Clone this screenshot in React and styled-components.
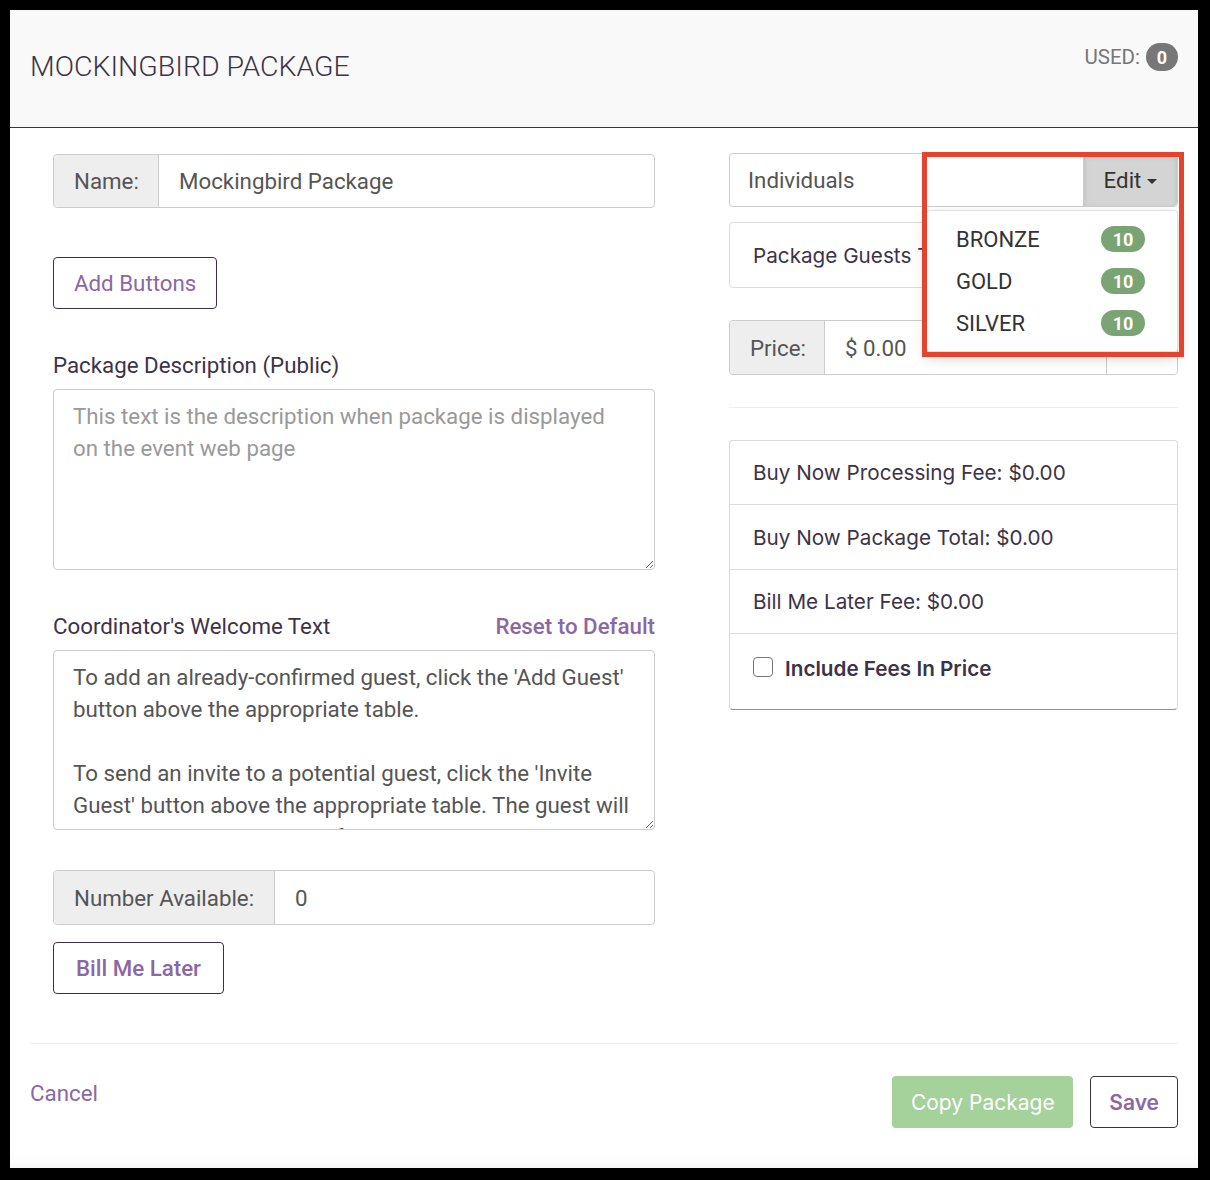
import React from "react";
import styled, { createGlobalStyle } from "styled-components";

const GlobalStyle = createGlobalStyle`
  html, body {
    margin: 0;
    padding: 0;
    background: #000;
  }
  body {
    padding: 10px 12px 12px 10px;
    font-family: Roboto, "Liberation Sans", sans-serif;
  }
  * { box-sizing: border-box; }
`

const PURPLE = "#8b67a3";
const DARK = "#3d3347";

const Modal = styled.div`
  width: 1188px;
  height: 1158px;
  background: #fff;
  display: flex;
  flex-direction: column;
  box-shadow: inset 0 -14px 14px -12px rgba(0, 0, 0, 0.06);
`

const Header = styled.div`
  height: 118px;
  background: #f9f9f9;
  border-bottom: 1px solid #3d2f48;
  display: flex;
  justify-content: space-between;
  align-items: center;
  padding: 0 20px;
`

const Title = styled.h1`
  margin: -4px 0 0;
  font-size: 28.5px;
  font-weight: 300;
  color: ${DARK};
`

const Used = styled.div`
  align-self: flex-start;
  margin-top: 33px;
  display: flex;
  align-items: center;
  gap: 6px;
  font-size: 20.5px;
  color: #777;
`

const CountBadge = styled.span`
  display: inline-flex;
  align-items: center;
  justify-content: center;
  min-width: 32px;
  height: 28px;
  border-radius: 14px;
  background: #777;
  color: #fff;
  font-weight: 700;
  font-size: 18px;
`

const Body = styled.div`
  display: grid;
  grid-template-columns: 602px 449px;
  column-gap: 74px;
  padding: 26px 20px 0 43px;
`

const Column = styled.div`
  display: flex;
  flex-direction: column;
  margin-top: ${(p) => p.mt || 0}px;
`

const InputGroup = styled.div`
  display: flex;
  height: ${(p) => p.h || 54}px;
  margin-top: ${(p) => p.mt || 0}px;
  border: 1px solid #ccc;
  border-radius: 4px;
  font-size: 22.3px;
  position: relative;
`

const Addon = styled.div`
  display: flex;
  align-items: center;
  width: ${(p) => p.w}px;
  padding-left: 20px;
  background: #eee;
  color: #555;
  border-right: 1px solid #ccc;
  border-radius: 4px 0 0 4px;
  flex-shrink: 0;
`

const Field = styled.div`
  flex: 1;
  display: flex;
  align-items: center;
  padding-left: ${(p) => p.pl || 20}px;
  color: #555;
`

const TailAddon = styled.div`
  width: ${(p) => p.w}px;
  display: flex;
  align-items: center;
  justify-content: center;
  gap: 6px;
  border-left: 1px solid #ccc;
  background: ${(p) => p.bg || "#fff"};
  color: #333;
  border-radius: 0 4px 4px 0;
  box-shadow: ${(p) => (p.active ? "inset 0 3px 5px rgba(0,0,0,0.125)" : "none")};
`

const Caret = styled.span`
  width: 0;
  height: 0;
  border-left: 5px solid transparent;
  border-right: 5px solid transparent;
  border-top: 5px solid #333;
  margin-top: 2px;
`

const OutlineButton = styled.button`
  align-self: flex-start;
  height: 52px;
  margin-top: ${(p) => p.mt || 0}px;
  padding: 0 ${(p) => p.px || 20}px;
  background: #fff;
  border: 1px solid #3d2f48;
  border-radius: 4px;
  color: ${PURPLE};
  font-family: ${(p) => (p.inter ? "Inter, sans-serif" : "Roboto, sans-serif")};
  font-size: ${(p) => (p.inter ? 21 : 22.3)}px;
  font-weight: ${(p) => (p.bold ? (p.inter ? 600 : 500) : 400)};
  cursor: pointer;
`

const LabelRow = styled.div`
  display: flex;
  justify-content: space-between;
  align-items: center;
  height: 28px;
  margin-top: ${(p) => p.mt}px;
  margin-bottom: 10px;
  font-size: 22.3px;
  color: ${DARK};
`

const LinkText = styled.span`
  color: ${PURPLE};
  font-weight: 500;
`

const TextArea = styled.textarea`
  display: block;
  width: 100%;
  height: ${(p) => p.h}px;
  padding: 10px 19px;
  border: 1px solid #ccc;
  border-radius: 4px;
  font-family: Roboto, sans-serif;
  font-size: 22.3px;
  line-height: 32px;
  color: #555;
  overflow: hidden;
  resize: vertical;
  outline: none;
  &::placeholder { color: #999; }
`

const Menu = styled.div`
  position: absolute;
  top: calc(100% + 4px);
  right: -1px;
  width: 252px;
  padding: 7px 0;
  background: #fff;
  border: 1px solid rgba(0, 0, 0, 0.12);
  border-radius: 4px;
  box-shadow: 0 6px 14px rgba(0, 0, 0, 0.18);
  z-index: 2;
`

const MenuItem = styled.div`
  height: 42px;
  display: flex;
  align-items: center;
  justify-content: space-between;
  padding: 0 32px 0 29px;
  font-size: 22px;
  color: #333;
`

const GreenBadge = styled.span`
  display: inline-flex;
  align-items: center;
  justify-content: center;
  width: 44px;
  height: 26px;
  border-radius: 13px;
  background: #7ba474;
  color: #fff;
  font-weight: 700;
  font-size: 18px;
`

const Highlight = styled.div`
  position: absolute;
  top: -2px;
  right: -7px;
  width: 262px;
  height: 205px;
  border: 5px solid #e5432b;
  z-index: 3;
  pointer-events: none;
`

const Panel = styled.div`
  margin-top: ${(p) => p.mt || 0}px;
  border: 1px solid #ddd;
  border-radius: 4px;
  font-family: Inter, "Noto Sans", sans-serif;
  font-size: 20.7px;
  color: ${DARK};
  ${(p) => p.accent && "border-bottom-color: #9a88a8;"}
`

const PanelRow = styled.div`
  height: ${(p) => p.h}px;
  display: flex;
  align-items: center;
  gap: 12px;
  padding: 0 23px ${(p) => (p.bold ? 6 : 0)}px;
  font-weight: ${(p) => (p.bold ? 600 : 400)};
  & + & { border-top: 1px solid #ddd; }
`

const CheckBox = styled.span`
  width: 20px;
  height: 20px;
  border: 1.5px solid #767676;
  border-radius: 4px;
  background: #fff;
  margin-top: -3px;
  flex-shrink: 0;
`

const Divider = styled.hr`
  margin: ${(p) => p.m};
  border: 0;
  border-top: 1px solid #eee;
`

const Footer = styled.div`
  padding: 0 20px;
  margin-top: auto;
  margin-bottom: 40px;
`

const FooterBar = styled.div`
  display: flex;
  align-items: flex-start;
  gap: 17px;
  margin-top: 32px;
`

const Cancel = styled.span`
  margin-top: 4px;
  margin-right: auto;
  font-size: 22.3px;
  color: ${PURPLE};
`

const GreenButton = styled.button`
  height: 52px;
  width: 181px;
  border: 0;
  border-radius: 4px;
  background: #a5d19b;
  color: #fff;
  font-family: Inter, sans-serif;
  font-size: 21px;
`

const App = () => {
  return (
    <>
      <GlobalStyle />
      <Modal>
        <Header>
          <Title>MOCKINGBIRD PACKAGE</Title>
          <Used>
            USED: <CountBadge>0</CountBadge>
          </Used>
        </Header>

        <Body>
          <Column>
            <InputGroup h={54}>
              <Addon w={105}>Name:</Addon>
              <Field>Mockingbird Package</Field>
            </InputGroup>

            <OutlineButton mt={49}>Add Buttons</OutlineButton>

            <LabelRow mt={42}>Package Description (Public)</LabelRow>
            <TextArea
              h={181}
              readOnly
              placeholder="This text is the description when package is displayed on the event web page"
            />

            <LabelRow mt={42}>
              Coordinator's Welcome Text
              <LinkText>Reset to Default</LinkText>
            </LabelRow>
            <TextArea
              h={180}
              readOnly
              defaultValue={
                "To add an already-confirmed guest, click the 'Add Guest' button above the appropriate table.\n\nTo send an invite to a potential guest, click the 'Invite Guest' button above the appropriate table. The guest will receive an invitation email from you asking them to complete registration."
              }
            />

            <InputGroup h={55} mt={40}>
              <Addon w={221}>Number Available:</Addon>
              <Field>0</Field>
            </InputGroup>

            <OutlineButton mt={17} px={22} bold>Bill Me Later</OutlineButton>
          </Column>

          <Column mt={-1}>
            <InputGroup h={54}>
              <Field pl={18}>Individuals</Field>
              <TailAddon w={94} bg="#d4d4d4" active>
                Edit <Caret />
              </TailAddon>
              <Menu>
                {["BRONZE", "GOLD", "SILVER"].map((tier) => (
                  <MenuItem key={tier}>
                    {tier}
                    <GreenBadge>10</GreenBadge>
                  </MenuItem>
                ))}
              </Menu>
              <Highlight />
            </InputGroup>

            <Panel mt={15}>
              <PanelRow h={64}>Package Guests Total: 0</PanelRow>
            </Panel>

            <InputGroup h={55} mt={32}>
              <Addon w={95}>Price:</Addon>
              <Field>$ 0.00</Field>
              <TailAddon w={71}>N/A</TailAddon>
            </InputGroup>

            <Divider m="32px 0 0" />

            <Panel mt={32} accent>
              <PanelRow h={63}>Buy Now Processing Fee: $0.00</PanelRow>
              <PanelRow h={65}>Buy Now Package Total: $0.00</PanelRow>
              <PanelRow h={64}>Bill Me Later Fee: $0.00</PanelRow>
              <PanelRow h={76} bold>
                <CheckBox />
                Include Fees In Price
              </PanelRow>
            </Panel>
          </Column>
        </Body>

        <Footer>
          <Divider m="0" />
          <FooterBar>
            <Cancel>Cancel</Cancel>
            <GreenButton>Copy Package</GreenButton>
            <OutlineButton inter bold px={18}>Save</OutlineButton>
          </FooterBar>
        </Footer>
      </Modal>
    </>
  );
};

export default App;
